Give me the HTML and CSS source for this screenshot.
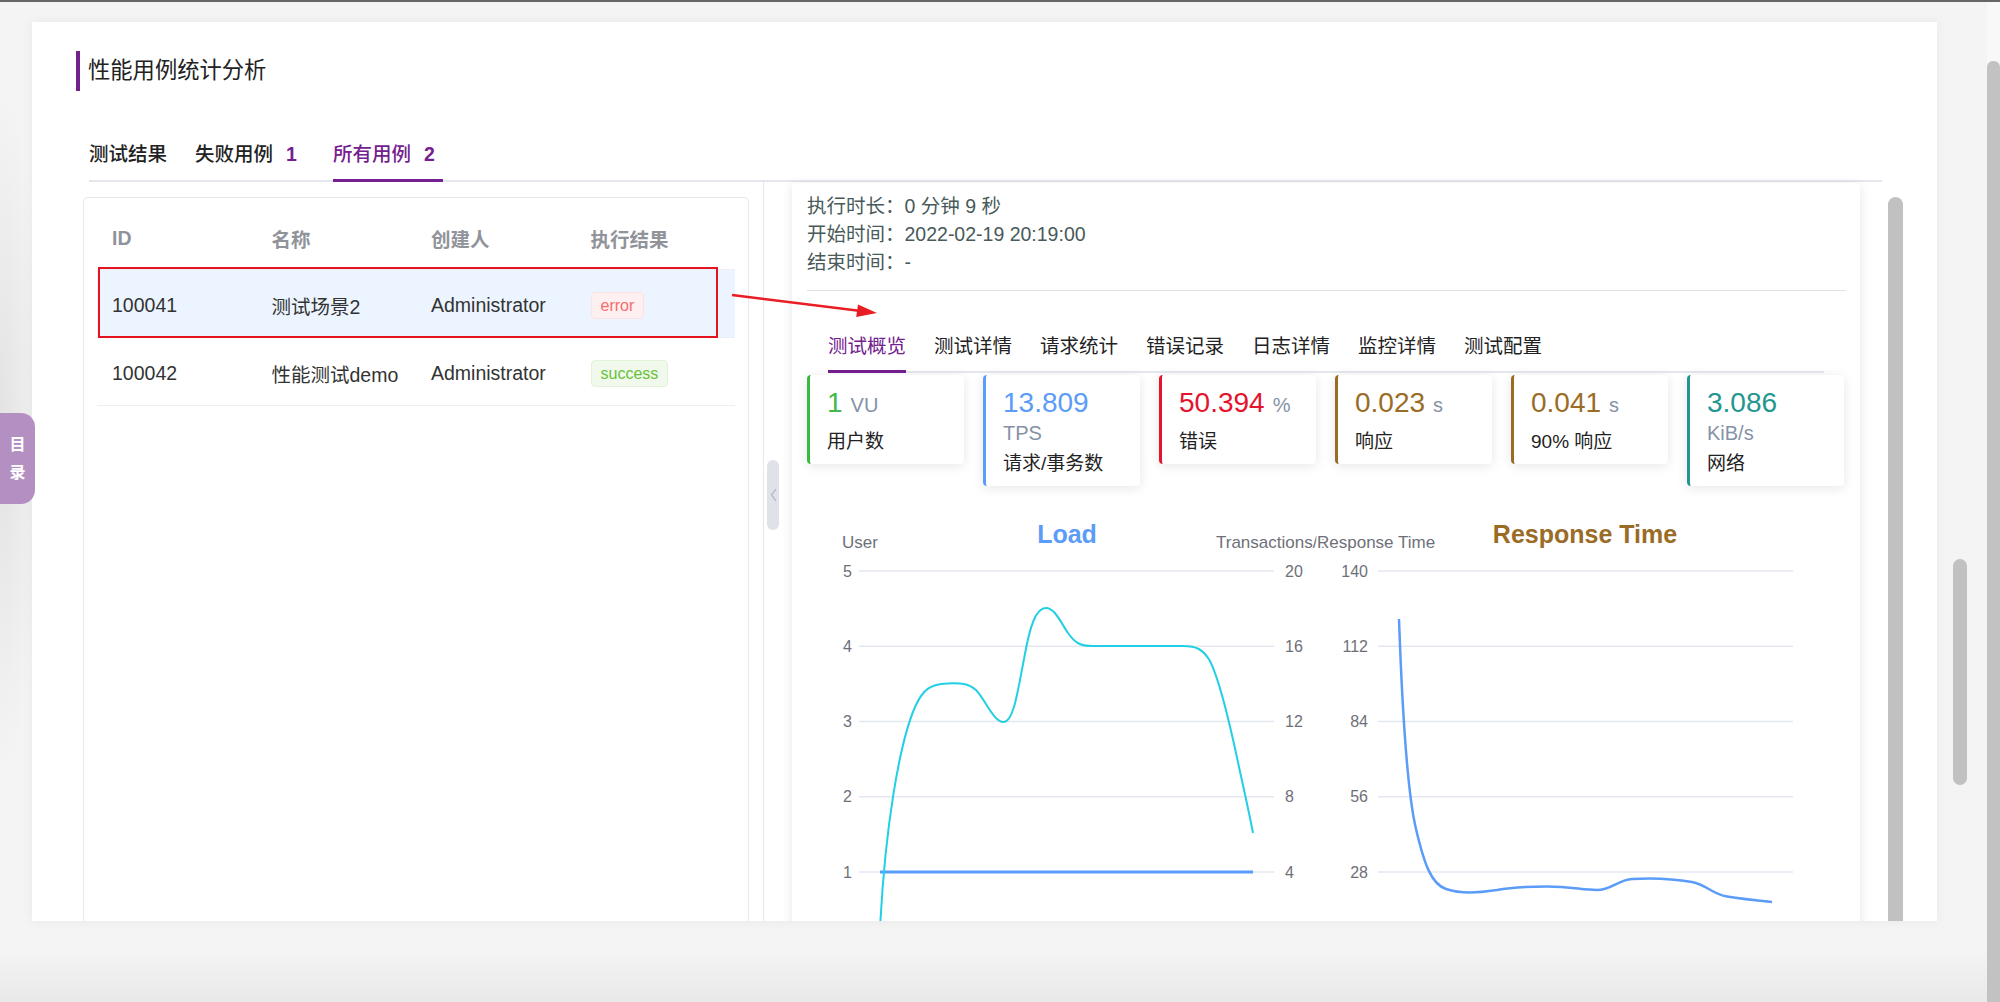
FILE: index.html
```html
<!DOCTYPE html>
<html lang="zh-CN">
<head>
<meta charset="utf-8">
<title>性能用例统计分析</title>
<link rel="stylesheet" href="styles.css">
</head>
<body>
<div class="topline"></div>
<div class="main">
  <div class="gutter">
    <div class="toc"><span>目</span><span>录</span></div>
  </div>

  <div class="panel">
    <div class="title">
      <span class="title-bar"></span>
      <h1 class="title-text">性能用例统计分析</h1>
    </div>

    <div class="tabs">
      <div class="tab">测试结果</div>
      <div class="tab">失败用例<span class="tab-num">1</span></div>
      <div class="tab active">所有用例<span class="tab-num">2</span></div>
    </div>

    <div class="content">
      <div class="left-card">
        <div class="grid-row head">
          <div class="cell">ID</div>
          <div class="cell">名称</div>
          <div class="cell">创建人</div>
          <div class="cell">执行结果</div>
        </div>
        <div class="grid-row body selected">
          <div class="cell">100041</div>
          <div class="cell">测试场景2</div>
          <div class="cell">Administrator</div>
          <div class="cell"><span class="tag tag-error">error</span></div>
        </div>
        <div class="grid-row body">
          <div class="cell">100042</div>
          <div class="cell">性能测试demo</div>
          <div class="cell">Administrator</div>
          <div class="cell"><span class="tag tag-success">success</span></div>
        </div>
        <div class="red-box"></div>
      </div>

      <div class="splitter">
        <div class="handle">
          <svg width="7" height="14" viewBox="0 0 7 14"><path d="M6 1 L1.5 7 L6 13" fill="none" stroke="#b6bac3" stroke-width="1.3"/></svg>
        </div>
      </div>

      <div class="right-card">
        <div class="info">
          <div>执行时长：0 分钟 9 秒</div>
          <div>开始时间：2022-02-19 20:19:00</div>
          <div>结束时间：-</div>
        </div>
        <div class="divider"></div>

        <div class="subtabs">
          <div class="subtab active">测试概览</div>
          <div class="subtab">测试详情</div>
          <div class="subtab">请求统计</div>
          <div class="subtab">错误记录</div>
          <div class="subtab">日志详情</div>
          <div class="subtab">监控详情</div>
          <div class="subtab">测试配置</div>
        </div>

        <div class="stats">
          <div class="stat c-green">
            <div class="num">1<span class="unit">VU</span></div>
            <div class="label">用户数</div>
          </div>
          <div class="stat c-blue">
            <div class="num">13.809</div>
            <div class="unit-line">TPS</div>
            <div class="label">请求/事务数</div>
          </div>
          <div class="stat c-red">
            <div class="num">50.394<span class="unit">%</span></div>
            <div class="label">错误</div>
          </div>
          <div class="stat c-brown">
            <div class="num">0.023<span class="unit">s</span></div>
            <div class="label">响应</div>
          </div>
          <div class="stat c-brown">
            <div class="num">0.041<span class="unit">s</span></div>
            <div class="label">90% 响应</div>
          </div>
          <div class="stat c-teal">
            <div class="num">3.086</div>
            <div class="unit-line">KiB/s</div>
            <div class="label">网络</div>
          </div>
        </div>

        <svg class="charts" width="1039" height="430" viewBox="0 0 1039 430">
          <g stroke="#e3e7ef" stroke-width="1.5">
            <line x1="52" y1="72" x2="467" y2="72"/>
            <line x1="52" y1="147.25" x2="467" y2="147.25"/>
            <line x1="52" y1="222.5" x2="467" y2="222.5"/>
            <line x1="52" y1="297.75" x2="467" y2="297.75"/>
            <line x1="52" y1="373" x2="467" y2="373"/>
            <line x1="52" y1="448.25" x2="467" y2="448.25"/>
            <line x1="571" y1="72" x2="986" y2="72"/>
            <line x1="571" y1="147.25" x2="986" y2="147.25"/>
            <line x1="571" y1="222.5" x2="986" y2="222.5"/>
            <line x1="571" y1="297.75" x2="986" y2="297.75"/>
            <line x1="571" y1="373" x2="986" y2="373"/>
          </g>
          <g class="axis" text-anchor="end">
            <text x="45" y="78">5</text>
            <text x="45" y="153">4</text>
            <text x="45" y="228">3</text>
            <text x="45" y="303">2</text>
            <text x="45" y="379">1</text>
            <text x="561" y="78">140</text>
            <text x="561" y="153">112</text>
            <text x="561" y="228">84</text>
            <text x="561" y="303">56</text>
            <text x="561" y="379">28</text>
          </g>
          <g class="axis" text-anchor="start">
            <text x="478" y="78">20</text>
            <text x="478" y="153">16</text>
            <text x="478" y="228">12</text>
            <text x="478" y="303">8</text>
            <text x="478" y="379">4</text>
          </g>
          <text class="axis-name" x="35" y="49">User</text>
          <text class="axis-name" x="409" y="49">Transactions/s</text>
          <text class="axis-name halo" x="510" y="49">Response Time</text>
          <text class="chart-title load" x="260" y="44" text-anchor="middle">Load</text>
          <text class="chart-title resp" x="778" y="44" text-anchor="middle">Response Time</text>

          <path d="M73,373 L446,373" stroke="#5b9cf8" stroke-width="3" fill="none"/>
          <path d="M73,430 C78,330 92,245 108,208 C116,190 124,185 140,184.5 C154,184 161,184 169,191 C178,200 187,224 197,223 C207,222 211,190 217,160 C223,126 229,109 239,109 C248,109 254,124 261,134 C268,144 273,147 286,147 L376,147 C389,147 396,150 403,162 C413,182 423,225 432,268 C439,300 443,318 446,334" stroke="#22cfe4" stroke-width="2" fill="none"/>
          <path d="M592,120 C595,205 600,292 609,330 C617,364 624,385 639,390 C654,395 670,394 690,391 C705,388 716,387.5 740,387.5 C764,387.5 775,391 790,391 C804,391 811,381 825,380 C840,379 862,379 885,383 C900,386 905,395 920,397.5 C935,400 950,401.5 965,403" stroke="#5b9cf8" stroke-width="2.5" fill="none"/>
        </svg>
      </div>

      <div class="inner-scroll"></div>
    </div>

    <svg class="arrow" width="200" height="50" viewBox="0 0 200 50">
      <line x1="32" y1="15" x2="159" y2="30.7" stroke="#ea1c24" stroke-width="2.4"/>
      <polygon points="177,33 156.2,37 158,24.6" fill="#ea1c24"/>
    </svg>
  </div>

  <div class="side-zone"><div class="side-thumb"></div></div>
  <div class="win-scroll"><div class="win-thumb"></div></div>
</div>
</body>
</html>
```

FILE: styles.css
```css
* { box-sizing: border-box; }

html, body {
  margin: 0;
  padding: 0;
}

body {
  width: 2000px;
  height: 1002px;
  overflow: hidden;
  font-family: "Liberation Sans", "Noto Sans CJK SC", sans-serif;
  color: #303133;
  background: linear-gradient(to bottom, #f4f4f4 0, #f4f4f4 950px, #e9e9e9 1002px);
}

.topline {
  height: 2px;
  background: #666;
}

.main {
  display: flex;
  align-items: flex-start;
  height: 1000px;
}

/* left gutter with the floating 目录 tab */
.gutter {
  position: relative;
  width: 32px;
  height: 1000px;
  flex: none;
  background: radial-gradient(ellipse 44px 340px at 0 430px, #e2e2e2 0, #ececec 55%, rgba(244,244,244,0) 100%);
}

.toc {
  position: absolute;
  left: 0;
  top: 411px;
  width: 35px;
  height: 91px;
  background: #b38fc2;
  border-radius: 0 14px 14px 0;
  color: #fff;
  font-weight: 700;
  font-size: 16px;
  line-height: 28px;
  display: flex;
  flex-direction: column;
  align-items: center;
  justify-content: center;
  z-index: 2;
}

/* main white panel */
.panel {
  position: relative;
  width: 1905px;
  height: 899px;
  margin-top: 20px;
  flex: none;
  background: #fff;
  overflow: hidden;
  padding: 29px 34px 0 44px;
  box-shadow: 0 0 10px rgba(0,0,0,0.06);
}

.title {
  display: flex;
  align-items: center;
  height: 40px;
}

.title-bar {
  width: 4px;
  height: 40px;
  background: #74208f;
}

.title-text {
  margin: 0 0 0 8px;
  font-size: 22.3px;
  font-weight: 400;
  line-height: 40px;
  color: #222;
}

/* top tabs */
.tabs {
  display: flex;
  gap: 28px;
  margin: 43px 21px 0 13px;
  border-bottom: 2px solid #e4e7ed;
  height: 48px;
}

.tab {
  height: 48px;
  margin-bottom: -2px;
  font-size: 19.5px;
  line-height: 40px;
  font-weight: 500;
  color: #222;
}

.tab-num {
  margin-left: 13px;
  padding-right: 8px;
  font-weight: 700;
  color: #74208f;
}

.tab.active {
  color: #74208f;
  box-shadow: inset 0 -3px 0 #74208f;
}

/* content row */
.content {
  display: flex;
  align-items: flex-start;
  margin-left: 7px;
  height: 740px;
}

.left-card {
  position: relative;
  width: 666px;
  height: 760px;
  flex: none;
  margin-top: 15px;
  border: 1px solid #e6e8ee;
  border-radius: 5px;
  padding: 10px 13px;
}

.grid-row {
  display: grid;
  grid-template-columns: repeat(4, 1fr);
  align-items: center;
  border-bottom: 1px solid #ebeef5;
}

.grid-row.head {
  height: 62px;
  font-size: 19.5px;
  font-weight: 700;
  color: #909399;
}

.grid-row.body {
  height: 68px;
  padding-top: 3px;
  font-size: 19.5px;
  color: #333;
}

.grid-row.selected {
  background: #ecf5ff;
}

.cell {
  padding-left: 15px;
  white-space: nowrap;
}

.tag {
  display: inline-block;
  height: 27px;
  line-height: 25px;
  padding: 0 9px;
  font-size: 16px;
  border: 1px solid;
  border-radius: 4px;
}

.tag-error {
  color: #f56c6c;
  background: #fef0f0;
  border-color: #fde2e2;
}

.tag-success {
  color: #67c23a;
  background: #f0f9eb;
  border-color: #e1f3d8;
}

.red-box {
  position: absolute;
  left: 14px;
  top: 69px;
  width: 620px;
  height: 71px;
  border: 2px solid #e5131d;
}

/* splitter */
.splitter {
  position: relative;
  width: 29px;
  height: 740px;
  flex: none;
  margin-left: 14px;
  border-left: 1px solid #e4e7ed;
}

.handle {
  position: absolute;
  left: 3px;
  top: 278px;
  width: 12px;
  height: 70px;
  background: #dfe2e8;
  border-radius: 6px;
  display: flex;
  align-items: center;
  justify-content: center;
}

/* right card */
.right-card {
  width: 1068px;
  height: 760px;
  flex: none;
  margin-top: 1px;
  background: #fff;
  border-radius: 4px;
  box-shadow: 0 2px 12px rgba(0,0,0,0.1);
  padding: 9px 14px 0 15px;
}

.info {
  font-size: 19.5px;
  line-height: 28px;
  color: #485a59;
}

.divider {
  height: 1px;
  margin-top: 14px;
  background: #dfe2e8;
}

.subtabs {
  display: flex;
  gap: 28px;
  margin: 35px 22px 0 21px;
  height: 47px;
  border-bottom: 2px solid #e4e7ed;
}

.subtab {
  height: 47px;
  margin-bottom: -2px;
  font-size: 19.5px;
  line-height: 40px;
  color: #222;
}

.subtab.active {
  color: #74208f;
  box-shadow: inset 0 -3px 0 #74208f;
}

.stats {
  display: flex;
  align-items: flex-start;
  gap: 19px;
  margin-top: 2px;
}

.stat {
  width: 157px;
  flex: none;
  border-left: 3px solid;
  border-radius: 4px;
  background: #fff;
  box-shadow: 0 2px 12px rgba(0,0,0,0.1);
  padding: 10px 8px 8px 17px;
}

.num {
  font-size: 28px;
  line-height: 36px;
}

.unit {
  margin-left: 8px;
  font-size: 20px;
  color: #8592a6;
}

.unit-line {
  font-size: 20px;
  line-height: 24px;
  color: #8592a6;
}

.label {
  margin-top: 5px;
  font-size: 19px;
  line-height: 28px;
  color: #222;
  white-space: nowrap;
}

.c-green { border-left-color: #3cb73f; }
.c-green .num { color: #43b848; }
.c-blue { border-left-color: #5b9cf8; }
.c-blue .num { color: #5b9cf8; }
.c-red { border-left-color: #e5142e; }
.c-red .num { color: #e5142e; }
.c-brown { border-left-color: #9a6c26; }
.c-brown .num { color: #9a6c26; }
.c-teal { border-left-color: #23968f; }
.c-teal .num { color: #23968f; }

.charts {
  display: block;
  margin-top: 13px;
}

.axis {
  font-family: "Liberation Sans", sans-serif;
  font-size: 16px;
  fill: #6e7079;
}

.axis-name {
  font-family: "Liberation Sans", sans-serif;
  font-size: 17px;
  fill: #6e7079;
}

.halo {
  stroke: #fff;
  stroke-width: 4px;
  paint-order: stroke;
}

.chart-title {
  font-family: "Liberation Sans", sans-serif;
  font-size: 25px;
  font-weight: 700;
}

.chart-title.load { fill: #5b9cf8; }
.chart-title.resp { fill: #9a6c26; }

.inner-scroll {
  width: 15px;
  height: 760px;
  flex: none;
  margin: 15px 0 0 28px;
  background: #c1c1c1;
  border-radius: 8px;
}

.arrow {
  position: absolute;
  left: 668px;
  top: 258px;
}

/* right side area and scrollbars */
.side-zone {
  width: 50px;
  height: 1000px;
  flex: none;
  padding: 557px 0 0 16px;
}

.side-thumb {
  width: 14px;
  height: 226px;
  background: #c1c1c1;
  border-radius: 7px;
}

.win-scroll {
  width: 13px;
  height: 1000px;
  flex: none;
  padding-top: 59px;
  background: #f8f8f8;
}

.win-thumb {
  width: 13px;
  height: 960px;
  background: #c2c2c2;
  border-radius: 6px;
}
```
